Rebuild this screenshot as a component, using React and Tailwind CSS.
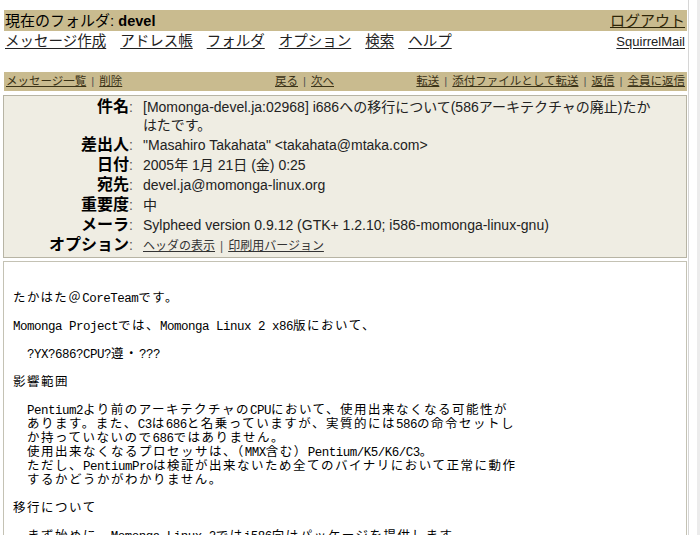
import React from 'react';

const UI = "font-['Liberation_Sans','Noto_Sans_CJK_JP',sans-serif]";

const NAV = ['メッセージ作成', 'アドレス帳', 'フォルダ', 'オプション', '検索', 'ヘルプ'];

const BODY = [
  'たかはた＠CoreTeamです。',
  '',
  'Momonga Projectでは、Momonga Linux 2 x86版において、',
  '',
  '  ?YX?686?CPU?遵・???',
  '',
  '影響範囲',
  '',
  '  Pentium2より前のアーキテクチャのCPUにおいて、使用出来なくなる可能性が',
  '  あります。また、C3は686と名乗っていますが、実質的には586の命令セットし',
  '  か持っていないので686ではありません。',
  '  使用出来なくなるプロセッサは、（MMX含む）Pentium/K5/K6/C3。',
  '  ただし、PentiumProは検証が出来ないため全てのバイナリにおいて正常に動作',
  '  するかどうかがわかりません。',
  '',
  '移行について',
  '',
  '  まず始めに、Momonga Linux 2ではi586向けパッケージを提供します。',
];

// ascii runs get a half-width mono face, the rest a full-width cjk face
function MonoLine({ text }) {
  if (!text) return <div className="h-[14px]" />;
  const parts = text.split(/([\x20-\x7e]+)/).filter(Boolean);
  return (
    <div className="h-[14px] leading-[14px] whitespace-pre">
      {parts.map((p, i) =>
        /^[\x20-\x7e]+$/.test(p) ? (
          <span key={i} className="font-['Liberation_Mono',monospace] text-[12.5px] tracking-[-0.5px]">{p}</span>
        ) : (
          <span key={i} className="font-['Noto_Sans_CJK_JP',sans-serif] text-[12.5px] tracking-[1.5px]">{p}</span>
        )
      )}
    </div>
  );
}

function Sep() {
  return <span className="text-[#555] px-[5px]">|</span>;
}

function HeaderRow({ label, children }) {
  return (
    <>
      <div className="text-right font-bold text-[16px] leading-[18px] py-[1px] text-black whitespace-nowrap">
        {label}<span className="font-normal text-[#555] text-[14px]">:</span>
      </div>
      <div className="text-[14px] leading-[18px] py-[1px] text-[#222] whitespace-nowrap">{children}</div>
    </>
  );
}

export default function App() {
  return (
    <div className={`w-[700px] h-[535px] overflow-hidden bg-white flex ${UI}`}>
      <div className="w-[688px] shrink-0 pl-[3px] pr-[1px]">
        {/* folder bar */}
        <div className="mt-[10px] h-[21px] bg-[#c9bb8f] flex items-center justify-between pl-[1px] pr-[2px] ml-[1px]">
          <div className="text-[15px] text-black leading-none">
            現在のフォルダ: <span className="font-bold text-[14.5px]">devel</span>
          </div>
          <a className="text-[15px] text-[#2e2608] underline leading-none">ログアウト</a>
        </div>

        {/* main nav */}
        <div className="h-[21px] flex items-center justify-between pl-[1px] pr-[2px] ml-[1px]">
          <div className="flex gap-[14px]">
            {NAV.map(n => (
              <a key={n} className="text-[14.5px] text-[#222] underline underline-offset-2 leading-none">{n}</a>
            ))}
          </div>
          <a className="text-[13px] text-[#222] underline underline-offset-2 leading-none">SquirrelMail</a>
        </div>

        {/* message toolbar */}
        <div className="mt-[20px] h-[19px] bg-[#c9bb8f] flex items-center text-[11.5px] text-[#3a3216] pr-[2px] ml-[1px]">
          <div className="w-[271px] pl-[2px] flex items-center">
            <a className="underline">メッセージ一覧</a><Sep /><a className="underline">削除</a>
          </div>
          <div className="flex items-center">
            <a className="underline">戻る</a><Sep /><a className="underline">次へ</a>
          </div>
          <div className="ml-auto flex items-center">
            <a className="underline">転送</a><Sep />
            <a className="underline">添付ファイルとして転送</a><Sep />
            <a className="underline">返信</a><Sep />
            <a className="underline">全員に返信</a>
          </div>
        </div>

        {/* headers */}
        <div className="mt-[4px] h-[163px] bg-[#efede3] border border-[#b7b4a4] pt-[1px] grid grid-cols-[129px_1fr] gap-x-[10px] content-start overflow-hidden">
          <HeaderRow label="件名">
            [Momonga-devel.ja:02968] i686への移行について(586アーキテクチャの廃止)たか<br />はたです。
          </HeaderRow>
          <HeaderRow label="差出人">"Masahiro Takahata" &lt;takahata@mtaka.com&gt;</HeaderRow>
          <HeaderRow label="日付">2005年 1月 21日 (金) 0:25</HeaderRow>
          <HeaderRow label="宛先">devel.ja@momonga-linux.org</HeaderRow>
          <HeaderRow label="重要度">中</HeaderRow>
          <HeaderRow label="メーラ">Sylpheed version 0.9.12 (GTK+ 1.2.10; i586-momonga-linux-gnu)</HeaderRow>
          <HeaderRow label="オプション">
            <span className="text-[12px] text-[#333]">
              <a className="underline">ヘッダの表示</a><Sep /><a className="underline">印刷用バージョン</a>
            </span>
          </HeaderRow>
        </div>

        {/* body */}
        <div className="mt-[3px] h-[300px] bg-white border border-[#c4c2b4] pt-[28px] pl-[9px] text-black overflow-hidden">
          {BODY.map((l, i) => (
            <MonoLine key={i} text={l} />
          ))}
        </div>
      </div>
      <div className="flex-1 border-l border-[#d6d6d6] flex justify-end">
        <div className="w-[3px] bg-[#ececec]" />
      </div>
    </div>
  );
}
